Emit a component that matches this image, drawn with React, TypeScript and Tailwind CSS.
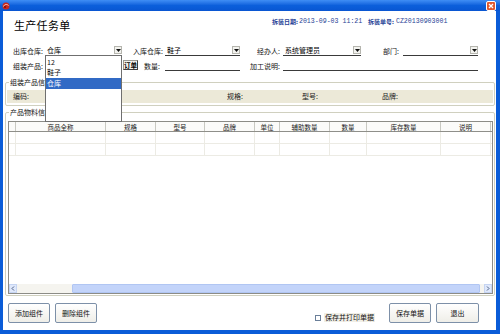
import React from "react";

const FONT = "font-['Noto_Sans_CJK_SC',sans-serif]";

function Arrow() {
  return (
    <div className="w-[8px] h-[8px] mb-[1px] border border-[#b5b5ae] bg-[#f3f3ef] flex items-center justify-center">
      <svg width="5" height="3" viewBox="0 0 5 3">
        <path d="M0 0 L5 0 L2.5 3 Z" fill="#111" />
      </svg>
    </div>
  );
}

function Combo({ w, text }: { w: string; text: string }) {
  return (
    <div className={`${w} h-[11px] border-b border-[#3a3a3a] flex items-end justify-between pl-[2px]`}>
      <span className="text-[7px] leading-[9px] text-black">{text}</span>
      <Arrow />
    </div>
  );
}

function Label({ cls, text }: { cls: string; text: string }) {
  return <span className={`${cls} text-[7px] leading-[10px] text-[#111] whitespace-nowrap`}>{text}</span>;
}

function Btn({ w, text }: { w: string; text: string }) {
  return (
    <div
      className={`${w} h-[20px] rounded-[2px] border border-[#7d90a8] bg-gradient-to-b from-[#ffffff] to-[#efeee8] flex items-center justify-center text-[7px] text-[#111]`}
    >
      {text}
    </div>
  );
}

const cols = ["", "商品全称", "规格", "型号", "品牌", "单位", "辅助数量", "数量", "库存数量", "说明"];

export default function App() {
  return (
    <div className={`w-[500px] h-[334px] bg-[#0a5cd8] flex flex-col overflow-hidden ${FONT}`}>
      {/* title bar */}
      <div className="h-[11px] flex items-center justify-between bg-gradient-to-b from-[#3f8ef5] via-[#0b5fdb] to-[#0956d2] px-[2px]">
        <svg width="8" height="8" viewBox="0 0 8 8">
          <circle cx="4" cy="4" r="3.5" fill="#c8281e" />
          <path d="M1.5 4.5 C2.5 2 5 2 6.5 3.5" stroke="#ffd0c0" strokeWidth="1" fill="none" />
          <circle cx="3" cy="5" r="1" fill="#7a0e0a" />
        </svg>
        <div className="w-[10px] h-[10px] mr-[2px] rounded-[2px] border border-white bg-[#e0582f] flex items-center justify-center">
          <svg width="6" height="6" viewBox="0 0 6 6">
            <path d="M1 1 L5 5 M5 1 L1 5" stroke="#fff" strokeWidth="1.3" />
          </svg>
        </div>
      </div>

      {/* client */}
      <div className="relative mx-[3px] w-[493px] h-[319px] bg-white flex flex-col">
        {/* header */}
        <div className="h-[34px] flex items-start">
          <div className="ml-[11px] w-[258px] pt-[7px] text-[11px] leading-[14px] text-black tracking-[0.3px]">生产任务单</div>
          <div className="w-[96px] pt-[7px] flex items-center text-[#1f3f96] leading-[8px]">
            <span className="text-[6px] font-bold">拆装日期:</span>
            <span className="ml-[1px] text-[6.6px] font-['Liberation_Mono',monospace]">2013-09-03 11:21</span>
          </div>
          <div className="pt-[7px] flex items-center text-[#1f3f96] leading-[8px]">
            <span className="text-[6px] font-bold">拆装单号:</span>
            <span className="ml-[2px] text-[6.6px] font-['Liberation_Mono',monospace]">CZ20130903001</span>
          </div>
        </div>

        {/* row 1 */}
        <div className="flex items-end h-[11px]">
          <Label cls="ml-[10px] w-[32px]" text="出库仓库:" />
          <Combo w="w-[77px]" text="仓库" />
          <Label cls="ml-[11px] w-[32px]" text="入库仓库:" />
          <Combo w="w-[75px]" text="鞋子" />
          <Label cls="ml-[17px] w-[26px]" text="经办人:" />
          <Combo w="w-[78px]" text="系统管理员" />
          <Label cls="ml-[22px] w-[20px]" text="部门:" />
          <Combo w="w-[75px]" text="" />
        </div>

        {/* row 2 */}
        <div className="mt-[4px] flex items-end h-[11px]">
          <Label cls="ml-[10px] w-[32px] self-center" text="组装产品:" />
          <div className="w-[78px]" />
          <div className="w-[15px] h-[10px] self-start border border-[#9a9a94] border-r-[#404040] border-b-[#404040] bg-[#f4f3ee] flex items-center justify-center text-[6.5px] font-bold leading-[8px]">
            订单
          </div>
          <Label cls="ml-[6px] w-[21px] self-center" text="数量:" />
          <div className="w-[75px] h-[11px] border-b border-[#3a3a3a]" />
          <Label cls="ml-[10px] w-[33px] self-center" text="加工说明:" />
          <div className="w-[195px] h-[11px] border-b border-[#3a3a3a]" />
        </div>

        {/* group 1 */}
        <div className="relative mt-[11px] ml-[2px] w-[490px] h-[24px] border border-[#d0d0bf] rounded-[2px] pt-[7px] pl-[1px] pr-[1px]">
          <span className="absolute left-[3px] top-[-5px] bg-white px-[1px] text-[7px] leading-[9px] text-[#111]">组装产品信息</span>
          <div className="h-[13px] bg-[#ece9d8] flex items-center text-[7px] leading-[9px] text-[#222]">
            <span className="ml-[6px] w-[214px]">编码:</span>
            <span className="w-[75px]">规格:</span>
            <span className="w-[80px]">型号:</span>
            <span>品牌:</span>
          </div>
        </div>

        {/* group 2 */}
        <div className="relative mt-[6px] ml-[2px] w-[490px] h-[184px] border border-[#d0d0bf] rounded-[2px] pt-[8px] pl-[2px] pr-[1px]">
          <span className="absolute left-[3px] top-[-5px] bg-white px-[1px] text-[7px] leading-[9px] text-[#111]">产品物料信息</span>
          <div className="w-[485px] h-[173px] border border-[#8c8c86] flex flex-col bg-white">
            <div className="h-[10px] grid grid-cols-[7px_90px_50px_49px_50px_25px_50px_37px_74px_50px] border-b border-[#8f8f8a] bg-[#fbfbf9]">
              {cols.map((c, i) => (
                <div key={i} className="border-r border-[#c9c9c2] flex items-center justify-center text-[6.5px] leading-[8px] text-[#222]">
                  {c}
                </div>
              ))}
            </div>
            {[0, 1].map((r) => (
              <div key={r} className="h-[12px] grid grid-cols-[7px_90px_50px_49px_50px_25px_50px_37px_74px_50px] border-b border-[#ecebe4]">
                {cols.map((_, i) => (
                  <div key={i} className="border-r border-[#ecebe4]" />
                ))}
              </div>
            ))}
            <div className="flex-1" />
            {/* scrollbar */}
            <div className="h-[9px] flex">
              <div className="w-[8px] h-[9px] bg-[#dfe8fb] border border-[#c5d4f2] flex items-center justify-center">
                <svg width="4" height="5" viewBox="0 0 4 5">
                  <path d="M3 0.5 L1 2.5 L3 4.5" stroke="#4d6185" strokeWidth="1" fill="none" />
                </svg>
              </div>
              <div className="w-[55px] bg-[#f5f4ef]" />
              <div className="w-[408px] bg-[#c3d4fa] border border-[#b1c6f3] rounded-[1px]" />
              <div className="flex-1 bg-[#f5f4ef]" />
              <div className="w-[8px] h-[9px] bg-[#dfe8fb] border border-[#c5d4f2] flex items-center justify-center">
                <svg width="4" height="5" viewBox="0 0 4 5">
                  <path d="M1 0.5 L3 2.5 L1 4.5" stroke="#4d6185" strokeWidth="1" fill="none" />
                </svg>
              </div>
            </div>
          </div>
        </div>

        {/* buttons */}
        <div className="mt-[7px] h-[20px] flex items-center">
          <div className="ml-[5px]">
            <Btn w="w-[42px]" text="添加组件" />
          </div>
          <div className="ml-[5px]">
            <Btn w="w-[42px]" text="删除组件" />
          </div>
          <div className="ml-[218px] mt-[9px] flex items-center">
            <div className="w-[6px] h-[6px] border border-[#6a7f99] bg-white" />
            <span className="ml-[3px] px-[1px] bg-[#f1efe7] text-[7px] leading-[9px] text-[#111]">保存并打印单据</span>
          </div>
          <div className="ml-[14px]">
            <Btn w="w-[42px]" text="保存单据" />
          </div>
          <div className="ml-[5px]">
            <Btn w="w-[43px]" text="退出" />
          </div>
        </div>

        {/* dropdown list overlay */}
        <div className="absolute left-[42px] top-[44px] w-[77px] h-[67px] border border-[#6f6f6f] bg-white pt-[1px]">
          <div className="h-[10px] pl-[1px] text-[7px] leading-[10px] text-[#111]">12</div>
          <div className="h-[11px] pl-[1px] text-[7px] leading-[11px] text-[#111]">鞋子</div>
          <div className="h-[11px] pl-[1px] bg-[#316ac5] text-[7px] leading-[11px] text-white">仓库</div>
        </div>
      </div>
    </div>
  );
}
